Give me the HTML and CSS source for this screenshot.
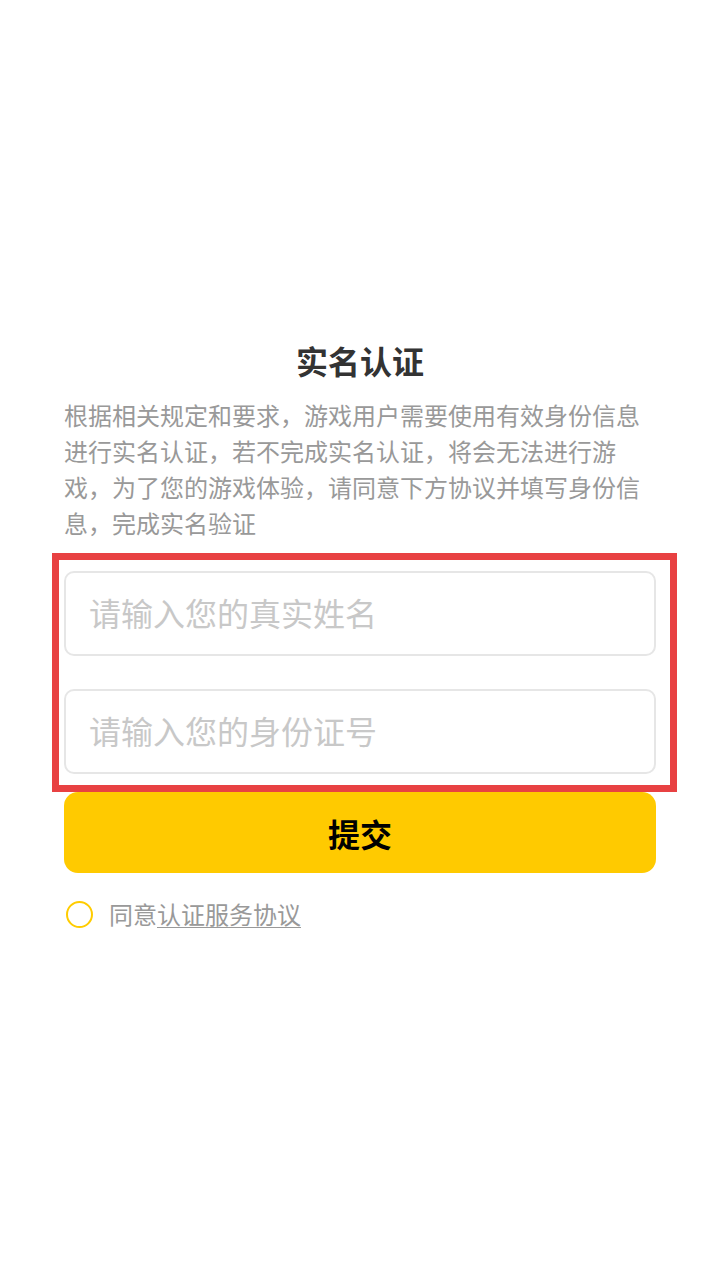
FILE: index.html
```html
<!DOCTYPE html>
<html lang="zh-CN">
<head>
<meta charset="utf-8">
<title>实名认证</title>
<link rel="stylesheet" href="styles.css">
</head>
<body>
<main class="page">
  <h1 class="title">实名认证</h1>
  <p class="desc">根据相关规定和要求，游戏用户需要使用有效身份信息进行实名认证，若不完成实名认证，将会无法进行游戏，为了您的游戏体验，请同意下方协议并填写身份信息，完成实名验证</p>
  <div class="fields">
    <input class="field" type="text" placeholder="请输入您的真实姓名">
    <input class="field" type="text" placeholder="请输入您的身份证号">
    <div class="highlight"></div>
  </div>
  <button class="submit" type="button">提交</button>
  <label class="agree">
    <span class="radio"></span>
    <span class="agree-text">同意<span class="link">认证服务协议</span></span>
  </label>
</main>
</body>
</html>
```
FILE: styles.css
```css
html, body {
  margin: 0;
  padding: 0;
  background: #ffffff;
}
body {
  font-family: "Noto Sans CJK SC", "Noto Sans", sans-serif;
}
.page {
  display: flex;
  flex-direction: column;
  padding: 338px 64px 0;
}
.title {
  margin: 0;
  font-size: 32px;
  line-height: 44px;
  font-weight: 700;
  color: #333333;
  text-align: center;
}
.desc {
  margin: 15px 0 0;
  font-size: 24px;
  line-height: 36px;
  color: #999999;
}
.fields {
  position: relative;
  margin-top: 30px;
  display: flex;
  flex-direction: column;
  gap: 33px;
}
.field {
  box-sizing: border-box;
  width: 100%;
  height: 85px;
  margin: 0;
  padding: 0 23px 3px;
  border: 2px solid #e6e6e6;
  border-radius: 10px;
  font-family: inherit;
  font-size: 32px;
  color: #333333;
  background: #ffffff;
  outline: none;
}
.field::placeholder {
  color: #c8c8c8;
}
.highlight {
  position: absolute;
  left: -12px;
  top: -18px;
  right: -21px;
  bottom: -18px;
  border: 7px solid #e84142;
  pointer-events: none;
}
.submit {
  margin-top: 18px;
  height: 81px;
  width: 100%;
  border: none;
  border-radius: 14px;
  background: #ffca00;
  color: #000000;
  font-family: inherit;
  font-size: 32px;
  font-weight: 700;
  padding: 0;
}
.agree {
  margin-top: 27px;
  display: flex;
  align-items: center;
  gap: 16px;
  padding-left: 2px;
  height: 28px;
}
.radio {
  box-sizing: border-box;
  width: 27px;
  height: 27px;
  border: 2px solid #ffcc00;
  border-radius: 50%;
  flex: none;
}
.agree-text {
  font-size: 24px;
  line-height: 28px;
  color: #999999;
}
.link {
  display: inline-block;
  line-height: 26px;
  border-bottom: 1px solid #999999;
}
```
